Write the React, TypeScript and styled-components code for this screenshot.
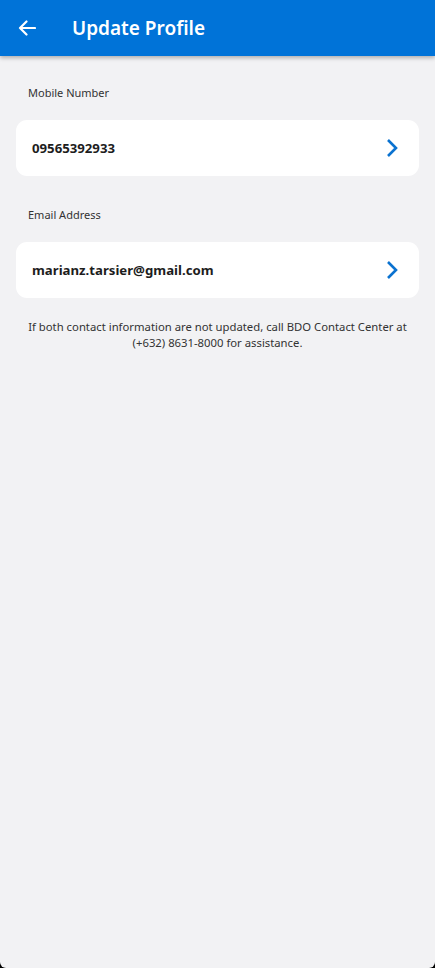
import React from "react";
import styled, { createGlobalStyle } from "styled-components";

const Global = createGlobalStyle`
  html, body { margin: 0; padding: 0; background: #000; }
  body { font-family: "Noto Sans", "Open Sans", sans-serif; }
  #root { min-height: 968px; }
`;

const Screen = styled.div`
  width: 435px;
  height: 968px;
  background: #f2f2f4;
  border-radius: 0 0 6px 6px;
  overflow: hidden;
  display: flex;
  flex-direction: column;
`;

const Header = styled.header`
  height: 56px;
  background: #0073d8;
  display: flex;
  align-items: center;
  box-shadow: 0 2px 4px rgba(0, 0, 0, 0.28);
  position: relative;
  z-index: 1;
  flex-shrink: 0;
`;

const BackButton = styled.button`
  width: 56px;
  height: 56px;
  border: none;
  background: transparent;
  padding: 0 0 0 18px;
  display: flex;
  align-items: center;
  color: #fff;
  cursor: pointer;
`;

const Title = styled.h1`
  margin: 0 0 0 16px;
  color: #fff;
  font-size: 19px;
  font-weight: 600;
  letter-spacing: 0;
`;

const Content = styled.main`
  padding: 14px 16px 0;
  display: flex;
  flex-direction: column;
`;

const Label = styled.div<{ $first?: boolean }>`
  font-size: 11px;
  color: #333;
  padding: 0 12px;
  height: 18px;
  line-height: 18px;
  margin-top: ${(p) => (p.$first ? "14px" : "30px")};
  margin-bottom: 18px;
`;

const Card = styled.button`
  height: 56px;
  border: none;
  background: #fff;
  border-radius: 11px;
  display: flex;
  align-items: center;
  justify-content: space-between;
  padding: 0 20px 0 16px;
  font-family: inherit;
  cursor: pointer;
`;

const Value = styled.span`
  font-size: 13.2px;
  font-weight: 700;
  color: #1d1d1d;
`;

const Note = styled.p`
  margin: 21px 0 0;
  font-size: 11.3px;
  line-height: 16px;
  color: #333;
  text-align: center;
`;

const Chevron = () => (
  <svg width="14" height="20" viewBox="0 0 14 20" fill="none">
    <path d="M3 2 L11 10 L3 18" stroke="#0a72d0" strokeWidth="2.6" strokeLinecap="butt" strokeLinejoin="miter" />
  </svg>
);

const BackArrow = () => (
  <svg width="18" height="16" viewBox="0 0 18 16" fill="none">
    <path d="M17 8 H2 M8.5 1.5 L2 8 L8.5 14.5" stroke="#fff" strokeWidth="2.2" strokeLinecap="round" strokeLinejoin="round" />
  </svg>
);

const rows = [
  { label: "Mobile Number", value: "09565392933" },
  { label: "Email Address", value: "marianz.tarsier@gmail.com" },
];

export default function App() {
  return (
    <>
      <Global />
      <Screen>
        <Header>
          <BackButton aria-label="Back">
            <BackArrow />
          </BackButton>
          <Title>Update Profile</Title>
        </Header>
        <Content>
          {rows.map((r, i) => (
            <React.Fragment key={r.label}>
              <Label $first={i === 0}>{r.label}</Label>
              <Card>
                <Value>{r.value}</Value>
                <Chevron />
              </Card>
            </React.Fragment>
          ))}
          <Note>
            If both contact information are not updated, call BDO Contact Center at
            <br />
            (+632) 8631-8000 for assistance.
          </Note>
        </Content>
      </Screen>
    </>
  );
}
